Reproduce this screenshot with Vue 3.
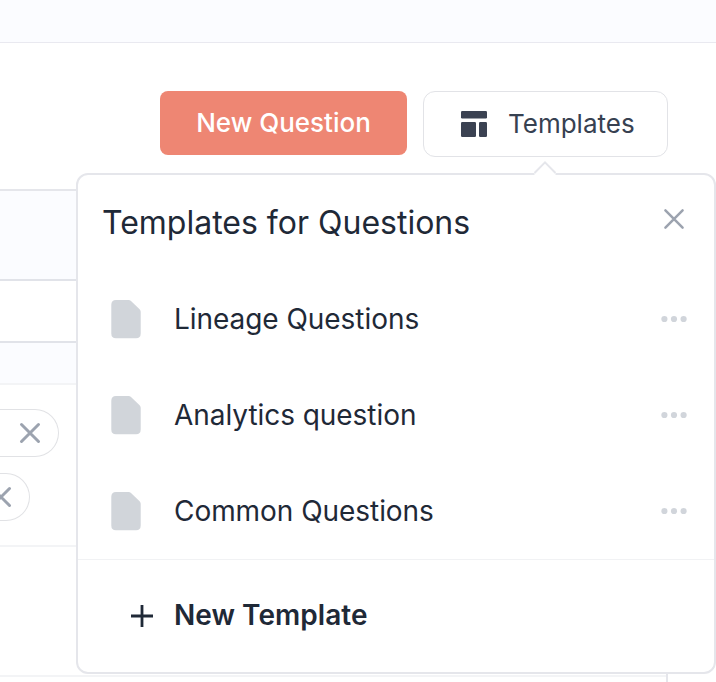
<script setup>
import { ref } from 'vue'

const templates = ref(['Lineage Questions', 'Analytics question', 'Common Questions'])
</script>

<template>
  <div class="page">
    <div class="topbar"></div>
    <div class="actions">
      <button class="btn primary"><span class="btn-text">New Question</span></button>
      <div class="anchor">
        <button class="btn outline">
          <svg class="layout-icon" width="28" height="28" viewBox="0 0 28 28">
            <rect x="1" y="1" width="26" height="7.5" rx="1.2" />
            <rect x="1" y="12" width="15" height="15" rx="1.2" />
            <rect x="19" y="12" width="8" height="15" rx="1.2" />
          </svg>
          <span class="outline-text">Templates</span>
        </button>
        <section class="popover">
          <svg class="arrow" width="24" height="15" viewBox="0 0 24 15">
            <path class="arrow-fill" d="M1.5 15V13L12 2.4L22.5 13V15Z" />
            <path class="arrow-line" d="M1.5 13L12 2.4L22.5 13" />
          </svg>
          <header class="head">
            <h2 class="title">Templates for Questions</h2>
            <svg class="close" width="22" height="22" viewBox="0 0 22 22">
              <path d="M2.4 2.4L19.6 19.6M19.6 2.4L2.4 19.6" />
            </svg>
          </header>
          <ul class="list">
            <li v-for="name in templates" :key="name" class="item">
              <svg class="doc" width="30" height="40" viewBox="0 0 30 40">
                <path d="M5 1H17.5Q19 1 20 2L28.6 10.2Q29.7 11.2 29.7 12.7V34.5Q29.7 39.2 25 39.2H5Q.3 39.2 .3 34.5V5.7Q.3 1 5 1Z" />
              </svg>
              <span class="name">{{ name }}</span>
              <svg class="dots" width="28" height="8" viewBox="0 0 28 8">
                <circle cx="4.4" cy="4" r="3.1" />
                <circle cx="14" cy="4" r="3.1" />
                <circle cx="23.6" cy="4" r="3.1" />
              </svg>
            </li>
          </ul>
          <footer class="foot">
            <svg class="plus" width="22" height="22" viewBox="0 0 22 22">
              <path d="M11 0V22M0 11H22" />
            </svg>
            <span class="new">New Template</span>
          </footer>
        </section>
      </div>
    </div>
    <div class="table">
      <div class="row band"></div>
      <div class="row filter"></div>
      <div class="row subhead"></div>
      <div class="row tags">
        <span class="chip wide">
          <svg width="22" height="22" viewBox="0 0 22 22"><path d="M2.5 2.5L19.5 19.5M19.5 2.5L2.5 19.5" /></svg>
        </span>
        <span class="chip narrow">
          <svg width="22" height="22" viewBox="0 0 22 22"><path d="M2.5 2.5L19.5 19.5M19.5 2.5L2.5 19.5" /></svg>
        </span>
      </div>
      <div class="row blank"></div>
    </div>
  </div>
</template>

<style>
body {
  margin: 0;
  overflow: hidden;
}
</style>

<style scoped>
* {
  box-sizing: border-box;
}
.page {
  width: 716px;
  height: 682px;
  overflow: hidden;
  display: flex;
  flex-direction: column;
  background: #fff;
  font-family: Inter, "Liberation Sans", sans-serif;
  color: #1f2937;
}
.topbar {
  flex: none;
  height: 43px;
  background: #fbfcff;
  border-bottom: 1px solid #e9e9f0;
}
.actions {
  flex: none;
  display: flex;
  justify-content: flex-end;
  align-items: flex-start;
  gap: 16px;
  padding: 48px 48px 32px 0;
}
.btn {
  display: flex;
  align-items: center;
  justify-content: center;
  margin: 0;
  padding: 0;
  font-family: inherit;
  font-size: 26px;
  line-height: 32px;
  white-space: nowrap;
}
.primary {
  width: 247px;
  height: 64px;
  border: 0;
  border-radius: 8px;
  background: #ee8673;
  color: #fff;
  font-weight: 500;
}
.outline {
  width: 245px;
  height: 66px;
  justify-content: flex-start;
  gap: 20px;
  padding-left: 36px;
  border: 1px solid #e2e3e7;
  border-radius: 12px;
  background: #fff;
  color: #374151;
}
.layout-icon {
  fill: #3b4252;
}
.anchor {
  position: relative;
}
.popover {
  position: absolute;
  top: 82px;
  right: -48px;
  z-index: 2;
  width: 640px;
  height: 501px;
  display: flex;
  flex-direction: column;
  border: 2px solid #e5e6eb;
  border-radius: 12px;
  background: #fff;
}
.arrow {
  position: absolute;
  top: -15px;
  left: 455px;
}
.arrow-fill {
  fill: #fff;
}
.arrow-line {
  fill: none;
  stroke: #e5e6eb;
  stroke-width: 2;
}
.head {
  display: flex;
  justify-content: space-between;
  align-items: center;
  height: 96px;
  padding: 0 29px 0 24px;
}
.title {
  margin: 0;
  font-size: 32px;
  line-height: 40px;
  font-weight: 400;
}
.close {
  margin-bottom: 8px;
  fill: none;
  stroke: #9ca3af;
  stroke-width: 2.5;
  stroke-linecap: round;
}
.list {
  margin: 0;
  padding: 0;
  list-style: none;
}
.item {
  display: flex;
  align-items: center;
  height: 96px;
  padding: 0 26px 0 33px;
}
.doc {
  flex: none;
  margin-right: 33px;
  fill: #d1d5da;
}
.name {
  flex: 1;
  font-size: 28px;
  line-height: 36px;
  letter-spacing: -0.05px;
}
.dots {
  fill: #d1d5db;
}
.foot {
  flex: 1;
  display: flex;
  align-items: center;
  gap: 21px;
  padding-left: 53px;
  border-top: 1px solid #f1f2f4;
}
.plus {
  fill: none;
  stroke: #1f2937;
  stroke-width: 2.8;
}
.new {
  padding-bottom: 2px;
  font-size: 28px;
  line-height: 36px;
  font-weight: 600;
  letter-spacing: 0.04px;
}
.table {
  flex: none;
  width: 668px;
  height: 520px;
  border-top: 2px solid #e5e6eb;
  border-right: 2px solid #e5e6eb;
}
.row {
  border-bottom: 2px solid #f3f4f6;
}
.band {
  height: 90px;
  background: #fbfcff;
  border-color: #e1e3e9;
}
.filter {
  height: 62px;
  border-color: #e1e3e9;
}
.subhead {
  height: 42px;
  background: #fbfcff;
}
.tags {
  display: flex;
  flex-direction: column;
  gap: 16px;
  height: 162px;
  padding-top: 24px;
}
.blank {
  height: 130px;
}
.chip {
  display: flex;
  align-items: center;
  justify-content: flex-end;
  height: 48px;
  padding-right: 17px;
  border: 1px solid #e1e2e5;
  border-left: 0;
  border-radius: 0 24px 24px 0;
}
.wide {
  width: 59px;
}
.narrow {
  width: 30px;
}
.chip svg {
  flex: none;
  fill: none;
  stroke: #9ca3af;
  stroke-width: 3;
  stroke-linecap: round;
}
</style>
